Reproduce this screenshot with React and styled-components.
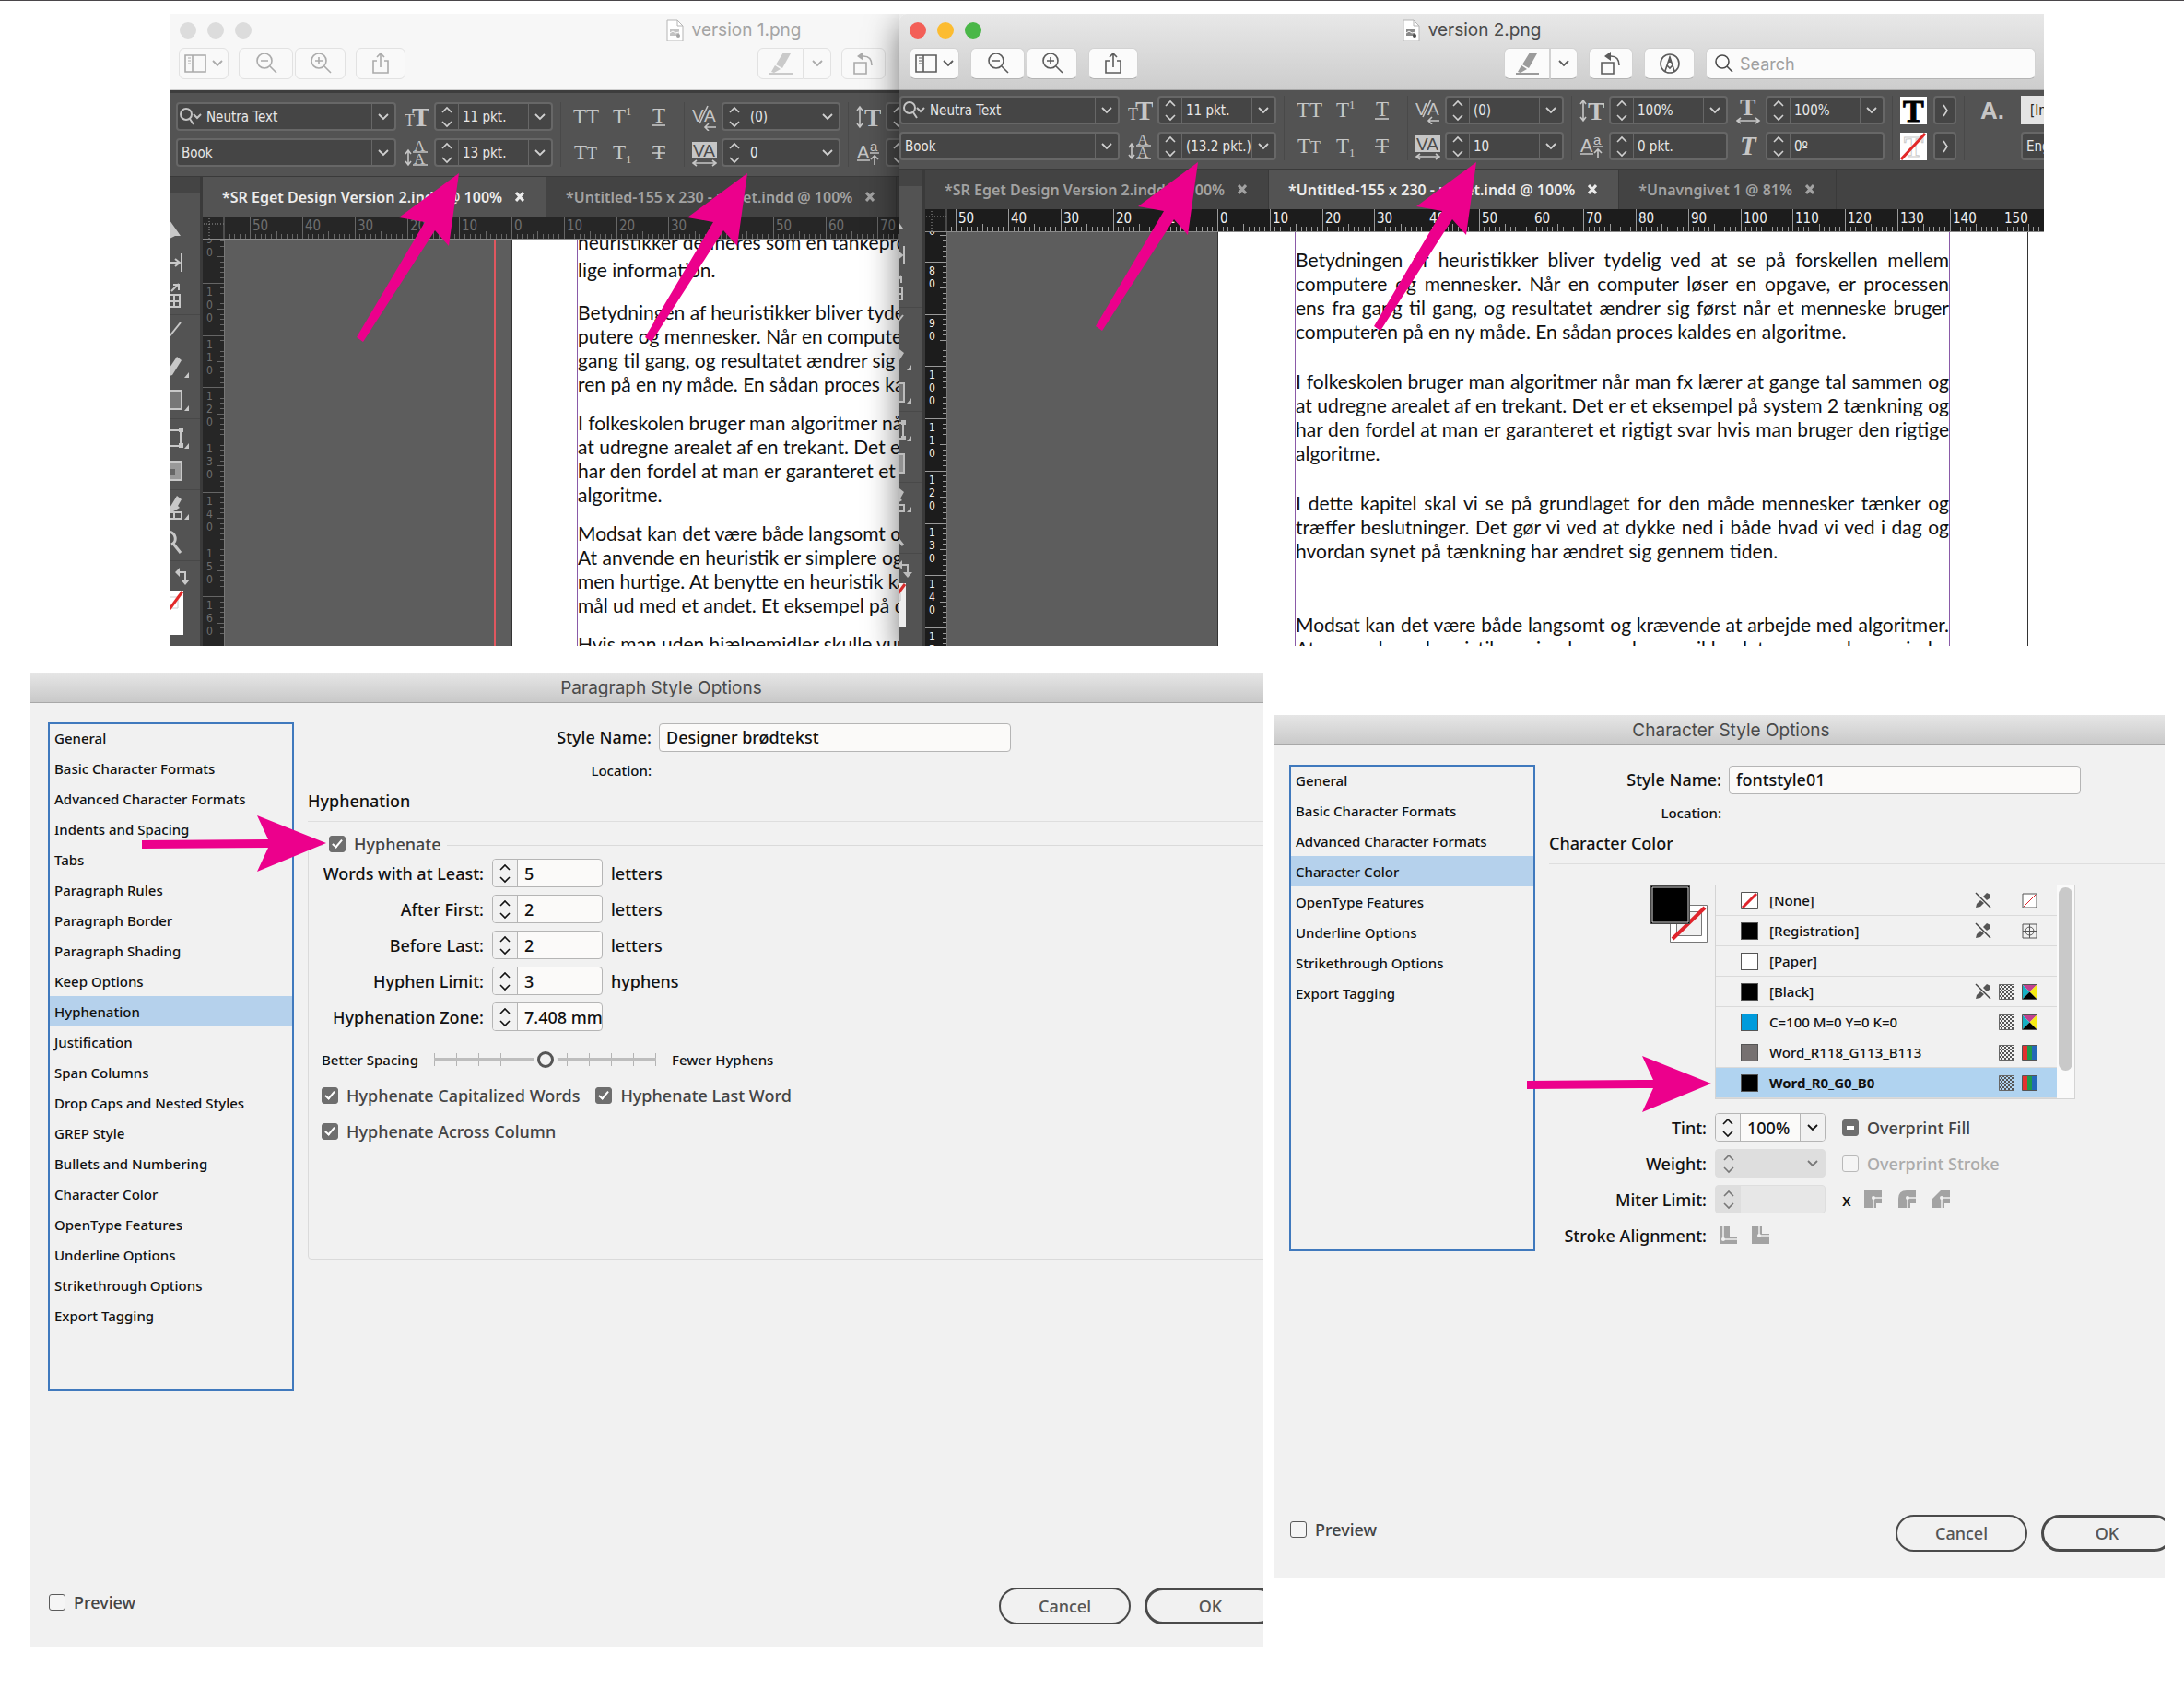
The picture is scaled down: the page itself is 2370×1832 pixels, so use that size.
import React, { Fragment, useId, useState } from 'react';
import styled, { createGlobalStyle } from 'styled-components';

const GlobalStyle = createGlobalStyle`
  * {
    box-sizing: border-box;
  }

  body {
    margin: 0;
    background: #fff;
  }

  button,
  input {
    margin: 0;
    font: inherit;
    color: inherit;
  }
`;

const systemFont = "Inter, Roboto, 'Liberation Sans', sans-serif";
const dialogFont = "'Noto Sans', 'Open Sans', sans-serif";
const panelFont = "'DejaVu Sans Condensed', 'DejaVu Sans', sans-serif";

const Page = styled.main`
  min-height: 100vh;
  border-top: 1px solid #4a464a;
  padding-bottom: 44px;
`;

/* ---------- arrows ---------- */

const ArrowSvg = styled.svg`
  position: absolute;
  left: ${props => props.$x}px;
  top: ${props => props.$y}px;
  z-index: 5;
  fill: #ec008c;
  pointer-events: none;
`;

const SlantedArrow = ({ x, y }) => (
  <ArrowSvg $x={x} $y={y} width="112" height="184" viewBox="0 0 112 184" aria-hidden="true">
    <path d="M111 0 46 48l28 5L0 178l7 5L85 62l15 17z" />
  </ArrowSvg>
);

const FlatArrow = ({ x, y }) => (
  <ArrowSvg $x={x} $y={y} width="200" height="62" viewBox="0 0 200 62" aria-hidden="true">
    <path d="M200 30 125 0l12 26L0 27v9l137-1-12 26z" />
  </ArrowSvg>
);

/* ---------- preview windows ---------- */

const Windows = styled.section`
  position: relative;
  display: grid;
  grid-template-columns: 792fr 1242fr;
  grid-template-rows: 686px;
  margin: 14px 152px 0 184px;
`;

const Window = styled.article`
  position: relative;
  z-index: ${props => (props.$active ? 2 : 1)};
  display: flex;
  flex-direction: column;
  min-width: 0;
  min-height: 0;
  border-radius: ${props => (props.$active ? '8px 0 0 0' : '0')};
  box-shadow: ${props => (props.$active ? '0 12px 36px rgba(0, 0, 0, 0.55)' : 'none')};
  clip-path: ${props => (props.$active ? 'inset(0 0 0 -60px)' : 'inset(0)')};
`;

const Chrome = styled.header`
  height: 83px;
  flex: none;
  overflow: hidden;
  font-family: ${systemFont};
  color: ${props => (props.$active ? '#4a4a4a' : '#a4a4a4')};
  background: ${props => (props.$active ? 'linear-gradient(#e8e8e8, #cdcdcd)' : '#f7f7f7')};
  border-bottom: 1px solid ${props => (props.$active ? '#a9a9a9' : '#cfcfcf')};
  border-top-left-radius: inherit;
`;

const TitleBar = styled.div`
  display: grid;
  grid-template-columns: 1fr auto 1fr;
  align-items: center;
  height: 35px;
  width: calc(100% + ${props => props.$overhang}px);
  padding: 0 11px;
`;

const Lights = styled.div`
  display: flex;
  gap: 12px;
`;

const Light = styled.button`
  width: 18px;
  height: 18px;
  padding: 0;
  border: 0;
  border-radius: 50%;
  background: ${props => props.$color};
`;

const WindowTitle = styled.h2`
  display: flex;
  align-items: center;
  gap: 9px;
  margin: 0;
  font-size: 19px;
  line-height: 24px;
  font-weight: 400;
`;

const ToolBar = styled.div`
  display: flex;
  align-items: center;
  gap: ${props => (props.$active ? 12 : 11)}px;
  height: 34px;
  margin-top: 2px;
  padding: ${props => (props.$active ? '0 9px 0 11px' : '0 15px 0 10px')};
`;

const Joined = styled.div`
  display: flex;
  gap: ${props => props.$gap || 0}px;
`;

const ToolButton = styled.button`
  display: flex;
  align-items: center;
  justify-content: center;
  gap: 6px;
  width: ${props => props.$width}px;
  height: 34px;
  padding: 0;
  border: 1px solid ${props => (props.$active ? '#d2d2d2' : '#e2e2e2')};
  border-bottom-color: ${props => (props.$active ? '#b4b4b4' : '#e2e2e2')};
  border-radius: ${props => props.$radius || '6px'};
  background: ${props => (props.$active ? '#fbfbfb' : '#f9f9f9')};
  color: ${props => (props.$active ? '#5c5c5c' : '#ababab')};

  & + & {
    border-left-width: ${props => (props.$merged ? 0 : 1)}px;
  }
`;

const Spacer = styled.div`
  flex: 1;
`;

const SearchBox = styled.label`
  display: flex;
  align-items: center;
  gap: 7px;
  width: 358px;
  height: 34px;
  padding: 0 9px;
  border: 1px solid #d2d2d2;
  border-bottom-color: #b4b4b4;
  border-radius: 6px;
  background: #fbfbfb;

  input {
    flex: 1;
    min-width: 0;
    border: 0;
    outline: 0;
    padding: 0;
    background: transparent;
    font-size: 18px;
  }

  input::placeholder {
    color: #a0a0a0;
    opacity: 1;
  }
`;

const Stroke = ({ width = 24, height = 24, children, ...rest }) => (
  <svg
    width={width}
    height={height}
    viewBox={`0 0 ${width} ${height}`}
    fill="none"
    stroke="currentColor"
    strokeWidth="1.6"
    aria-hidden="true"
    {...rest}
  >
    {children}
  </svg>
);

const FileIcon = () => (
  <Stroke width={19} height={24} strokeWidth="1">
    <path d="M1 1h11l6 6v16H1z" fill="#fff" stroke="#b5b5b5" />
    <path d="M12 1v6h6" stroke="#b5b5b5" />
    <path d="M4 11h10v7H4z" fill="currentColor" stroke="none" opacity=".65" />
    <path d="m4 15 3-2 3 2 4-1M9 19h6" stroke="#fff" />
    <circle cx="13" cy="18" r="2" fill="currentColor" stroke="none" />
  </Stroke>
);

const SidebarIcon = () => (
  <Stroke width={24} height={20}>
    <path d="M1 1h22v18H1zM9 1v18" />
    <path d="M4 4h3M4 7h3M4 10h3" strokeWidth="1.2" />
  </Stroke>
);

const ChevronIcon = () => (
  <Stroke width={12} height={8} strokeWidth="1.8">
    <path d="m1 1 5 5 5-5" />
  </Stroke>
);

const LensIcon = ({ plus }) => (
  <Stroke width={24} height={24}>
    <circle cx="10" cy="9" r="8" />
    <path d="m16 15 7 7M6 9h8" />
    {plus && <path d="M10 5v8" />}
  </Stroke>
);

const ShareIcon = () => (
  <Stroke width={20} height={26}>
    <path d="M6 10H2v13h16V10h-4M10 17V2M6 6l4-4 4 4" />
  </Stroke>
);

const MarkerIcon = () => (
  <svg width="26" height="26" viewBox="0 0 26 26" fill="currentColor" opacity=".6" aria-hidden="true">
    <path d="m16 1 8 1-9 16-7-4zM7 15l6 4-7 4-3-1zM1 23h25v2H1z" />
  </svg>
);

const RotateIcon = () => (
  <Stroke width={24} height={26}>
    <path d="M2 12h13v12H2zM12 5c6 0 9 4 9 10" />
    <path d="m5 5 7-5v10z" fill="currentColor" stroke="none" />
  </Stroke>
);

const MarkupIcon = () => (
  <Stroke width={24} height={24}>
    <circle cx="12" cy="12" r="10" />
    <path d="m7 20 5-15 5 15M9 14l3 3 3-3" />
    <path d="m12 4 2 7h-4z" fill="currentColor" stroke="none" />
  </Stroke>
);

const SearchIcon = () => (
  <Stroke width={20} height={22}>
    <circle cx="8" cy="9" r="7" />
    <path d="m13 14 6 6" />
  </Stroke>
);

const PreviewChrome = ({ title, active }) => {
  const colors = active ? ['#f35f57', '#fcbc31', '#4ab748'] : ['#dcdcdc', '#dcdcdc', '#dcdcdc'];
  return (
    <Chrome $active={active}>
      <TitleBar $overhang={active ? 0 : 432}>
        <Lights>
          {['Close', 'Minimize', 'Zoom'].map((name, i) => (
            <Light key={name} $color={colors[i]} aria-label={name} />
          ))}
        </Lights>
        <WindowTitle>
          <FileIcon />
          {title}
        </WindowTitle>
      </TitleBar>
      <ToolBar $active={active}>
        <ToolButton $active={active} $width={54} aria-label="View">
          <SidebarIcon />
          <ChevronIcon />
        </ToolButton>
        <Joined $gap={2}>
          <ToolButton $active={active} $width={59} aria-label="Zoom out">
            <LensIcon />
          </ToolButton>
          <ToolButton $active={active} $width={55} aria-label="Zoom in">
            <LensIcon plus />
          </ToolButton>
        </Joined>
        <ToolButton $active={active} $width={54} aria-label="Share">
          <ShareIcon />
        </ToolButton>
        <Spacer />
        <Joined>
          <ToolButton $active={active} $width={50} $radius="6px 0 0 6px" aria-label="Highlight">
            <MarkerIcon />
          </ToolButton>
          <ToolButton
            $active={active}
            $merged
            $width={30}
            $radius="0 6px 6px 0"
            aria-label="Highlight colors"
          >
            <ChevronIcon />
          </ToolButton>
        </Joined>
        <ToolButton $active={active} $width={48} aria-label="Rotate">
          <RotateIcon />
        </ToolButton>
        {active && (
          <Fragment>
            <ToolButton $active $width={55} aria-label="Markup">
              <MarkupIcon />
            </ToolButton>
            <SearchBox>
              <SearchIcon />
              <input type="search" placeholder="Search" aria-label="Search" />
            </SearchBox>
          </Fragment>
        )}
      </ToolBar>
    </Chrome>
  );
};

/* ---------- control panel ---------- */

const ControlPanel = styled.div`
  display: flex;
  flex: none;
  overflow: hidden;
  padding: ${props => (props.$first ? '10px 0 10px 7px' : '6px 0 9px')};
  border-top: ${props => (props.$first ? 3 : 0)}px solid #3d3d3d;
  background: #535353;
  color: #e8e8e8;
  font-family: ${panelFont};
  font-size: 15px;
`;

const Group = styled.div`
  display: grid;
  grid-template-columns: ${props => props.$columns || 'auto'};
  grid-auto-rows: 31px;
  flex: none;
  align-items: center;
  gap: 8px ${props => props.$gap || 0}px;
  margin-right: ${props => props.$after || 0}px;
`;

const Divider = styled.div`
  flex: none;
  width: 1px;
  margin: 0 8px;
  background: #494949;
`;

const Field = styled.div`
  display: flex;
  width: ${props => props.$width || 129}px;
  height: 31px;
  border: 2px solid #676767;
  border-radius: 4px;
  background: #454545;

  input {
    flex: 1;
    min-width: 0;
    border: 0;
    outline: 0;
    padding: 0 0 0 4px;
    background: transparent;
  }
`;

const FieldButton = styled.button`
  display: flex;
  align-items: center;
  justify-content: center;
  flex: none;
  width: 25px;
  padding: 0;
  border: 0;
  border-left: ${props => (props.$left ? 0 : 1)}px solid #676767;
  border-right: ${props => (props.$left ? 1 : 0)}px solid #676767;
  background: transparent;
  color: #d0d0d0;
`;

const Prefix = styled.span`
  display: flex;
  align-items: center;
  padding-left: 1px;
  color: #c4c4c4;
`;

const GlyphButton = styled.button`
  display: flex;
  align-items: center;
  justify-content: center;
  height: 31px;
  padding: 0;
  border: 0;
  background: transparent;
  color: #c6c6c6;
`;

const ArrowsIcon = () => (
  <Stroke width={14} height={24}>
    <path d="m2 7 5-5 5 5M2 17l5 5 5-5" />
  </Stroke>
);

const GlyphSvg = ({ children, width = 27 }) => (
  <svg
    width={width}
    height="31"
    viewBox={`0 0 ${width} 31`}
    fill="#c6c6c6"
    stroke="none"
    fontFamily="'Liberation Serif', serif"
    aria-hidden="true"
  >
    {children}
  </svg>
);

const lineStyle = { stroke: '#c6c6c6', strokeWidth: 1.6, fill: 'none' };

const SizeIcon = () => (
  <GlyphSvg>
    <text x="0" y="26" fontSize="18">T</text>
    <text x="8" y="26" fontSize="30" fontWeight="700">T</text>
  </GlyphSvg>
);

const LeadingIcon = () => (
  <GlyphSvg>
    <text x="10" y="14" fontSize="17">A</text>
    <text x="10" y="28" fontSize="17">A</text>
    <path d="M9 15h16M9 29h16M4 14v14M1 17l3-4 3 4M1 25l3 4 3-4" {...lineStyle} />
  </GlyphSvg>
);

const KerningIcon = () => (
  <GlyphSvg>
    <text x="0" y="21" fontSize="19" fontFamily="'Liberation Sans'">V</text>
    <text x="13" y="21" fontSize="19" fontFamily="'Liberation Sans'">A</text>
    <path d="M8 23 17 4M26 27H14M18 23l-4 4 4 4" {...lineStyle} />
  </GlyphSvg>
);

const TrackingIcon = () => (
  <GlyphSvg>
    <path d="M0 4h27v18H0z" />
    <text x="1" y="20" fontSize="19" fill="#4a4a4a" fontFamily="'Liberation Sans'">VA</text>
    <path d="M2 27h23M5 24l-4 3 4 3M22 24l4 3-4 3" {...lineStyle} />
  </GlyphSvg>
);

const TallIcon = () => (
  <GlyphSvg>
    <text x="9" y="26" fontSize="28" fontWeight="700">T</text>
    <path d="M4 6v20M1 9l3-4 3 4M1 23l3 4 3-4" {...lineStyle} />
  </GlyphSvg>
);

const WideIcon = () => (
  <GlyphSvg>
    <text x="4" y="21" fontSize="26" fontWeight="700">T</text>
    <path d="M2 27h22M5 24l-4 3 4 3M21 24l4 3-4 3" {...lineStyle} />
  </GlyphSvg>
);

const BaselineIcon = () => (
  <GlyphSvg>
    <text x="1" y="22" fontSize="20" fontFamily="'Liberation Sans'">A</text>
    <text x="15" y="14" fontSize="15" fontFamily="'Liberation Sans'">a</text>
    <path d="M1 24h14M15 16h10M20 29V20M16 23l4-4 4 4" {...lineStyle} />
  </GlyphSvg>
);

const SkewIcon = () => (
  <GlyphSvg>
    <text x="4" y="25" fontSize="29" fontWeight="700" fontStyle="italic">T</text>
  </GlyphSvg>
);

const TypeGlyph = ({ kind }) => {
  switch (kind) {
    case 'All caps':
      return (
        <GlyphSvg width={29}>
          <text x="0" y="23" fontSize="23">TT</text>
        </GlyphSvg>
      );
    case 'Superscript':
      return (
        <GlyphSvg width={24}>
          <text x="1" y="23" fontSize="23">T</text>
          <text x="15" y="14" fontSize="13">1</text>
        </GlyphSvg>
      );
    case 'Underline':
      return (
        <GlyphSvg width={18}>
          <text x="2" y="22" fontSize="23">T</text>
          <path d="M1 25h15" {...lineStyle} />
        </GlyphSvg>
      );
    case 'Small caps':
      return (
        <GlyphSvg width={29}>
          <text x="1" y="23" fontSize="23">T</text>
          <text x="15" y="23" fontSize="18">T</text>
        </GlyphSvg>
      );
    case 'Subscript':
      return (
        <GlyphSvg width={24}>
          <text x="1" y="23" fontSize="23">T</text>
          <text x="15" y="27" fontSize="13">1</text>
        </GlyphSvg>
      );
    default:
      return (
        <GlyphSvg width={18}>
          <text x="2" y="23" fontSize="23">T</text>
          <path d="M1 16h15" {...lineStyle} />
        </GlyphSvg>
      );
  }
};

const glyphs = ['All caps', 'Superscript', 'Underline', 'Small caps', 'Subscript', 'Strikethrough'];

const SwatchT = styled.span`
  display: flex;
  align-items: center;
  justify-content: center;
  height: 30px;
  overflow: hidden;
  background: #fff;
`;

const MoreButton = styled.button`
  display: flex;
  align-items: center;
  justify-content: center;
  width: 25px;
  height: 31px;
  padding: 0;
  border: 2px solid #676767;
  border-radius: 4px;
  background: #454545;
  color: #d0d0d0;
`;

const PlainBox = styled.div`
  display: flex;
  align-items: center;
  width: 60px;
  height: 31px;
  padding-left: ${props => (props.$light ? 10 : 4)}px;
  border: ${props => (props.$light ? 0 : 2)}px solid #676767;
  border-radius: ${props => (props.$light ? 0 : 4)}px;
  background: ${props => (props.$light ? '#e4e4e4' : '#454545')};
  color: ${props => (props.$light ? '#222' : '#e8e8e8')};
`;

const NumberField = ({ name, value, menu = true }) => (
  <Field>
    <FieldButton $left aria-label={`${name} step`}>
      <ArrowsIcon />
    </FieldButton>
    <input defaultValue={value} aria-label={name} />
    {menu && (
      <FieldButton aria-label={`${name} menu`}>
        <ChevronIcon />
      </FieldButton>
    )}
  </Field>
);

const FontFields = () => (
  <Group $after={9}>
    <Field $width={239}>
      <Prefix>
        <Stroke width={26} height={20} strokeWidth="2">
          <circle cx="8" cy="7" r="6" />
          <path d="m12 12 4 6M16 7l4 4 4-4" />
        </Stroke>
      </Prefix>
      <input defaultValue="Neutra Text" aria-label="Font" />
      <FieldButton aria-label="Font menu">
        <ChevronIcon />
      </FieldButton>
    </Field>
    <Field $width={239}>
      <input defaultValue="Book" aria-label="Font style" />
      <FieldButton aria-label="Font style menu">
        <ChevronIcon />
      </FieldButton>
    </Field>
  </Group>
);

const Controls = ({ leading, tracking, first }) => (
  <ControlPanel $first={first}>
    <FontFields />
    <Group $columns="27px auto" $gap={5}>
      <SizeIcon />
      <NumberField name="Size" value="11 pkt." />
      <LeadingIcon />
      <NumberField name="Leading" value={leading} />
    </Group>
    <Divider />
    <Group $columns="39px 39px 39px">
      {glyphs.map(kind => (
        <GlyphButton key={kind} aria-label={kind}>
          <TypeGlyph kind={kind} />
        </GlyphButton>
      ))}
    </Group>
    <Divider />
    <Group $columns="27px auto" $gap={5}>
      <KerningIcon />
      <NumberField name="Kerning" value="(0)" />
      <TrackingIcon />
      <NumberField name="Tracking" value={tracking} />
    </Group>
    <Divider />
    <Group $columns="27px auto" $gap={5} $after={9}>
      <TallIcon />
      <NumberField name="Vertical scale" value={first ? '' : '100%'} />
      <BaselineIcon />
      <NumberField name="Baseline shift" value={first ? '' : '0 pkt.'} menu={false} />
    </Group>
    {!first && (
      <Fragment>
        <Group $columns="27px auto" $gap={5}>
          <WideIcon />
          <NumberField name="Horizontal scale" value="100%" />
          <SkewIcon />
          <NumberField name="Skew" value="0º" menu={false} />
        </Group>
        <Divider />
        <Group $columns="29px 25px" $gap={7}>
          <SwatchT>
            <svg width="29" height="30" viewBox="0 0 29 30" fontFamily="'Liberation Serif'" aria-hidden="true">
              <text x="3" y="27" fontSize="34" fontWeight="700" stroke="#000">T</text>
            </svg>
          </SwatchT>
          <MoreButton aria-label="Fill options">
            <Stroke width={8} height={14}>
              <path d="m2 1 4 6-4 6" />
            </Stroke>
          </MoreButton>
          <SwatchT>
            <svg width="29" height="30" viewBox="0 0 29 30" fontFamily="'Liberation Serif'" aria-hidden="true">
              <text x="4" y="26" fontSize="32" fontWeight="700" fill="none" stroke="#ccc">T</text>
              <path d="M1 29 27 1" stroke="#e22828" strokeWidth="3" />
            </svg>
          </SwatchT>
          <MoreButton aria-label="Stroke options">
            <Stroke width={8} height={14}>
              <path d="m2 1 4 6-4 6" />
            </Stroke>
          </MoreButton>
        </Group>
        <Divider />
        <Group $columns="43px auto" $gap={10}>
          <svg width="43" height="31" viewBox="0 0 43 31" fill="#c6c6c6" fontFamily="'Liberation Sans'" aria-hidden="true">
            <text x="9" y="25" fontSize="26" fontWeight="700">A.</text>
          </svg>
          <PlainBox $light>[In</PlainBox>
          <span />
          <PlainBox>Eng</PlainBox>
        </Group>
      </Fragment>
    )}
  </ControlPanel>
);

/* ---------- document area ---------- */

const Workspace = styled.div`
  display: flex;
  flex: 1;
  min-height: 0;
  border-top: 1px solid #3a3a3a;
  background: #3a3a3a;
`;

const Tools = styled.div`
  flex: none;
  width: ${props => (props.$first ? 33 : 25)}px;
  margin-right: 3px;
  overflow: hidden;
  border-top: 18px solid #444;
  background: #535353;
`;

const ToolColumn = styled.div`
  display: flex;
  flex-direction: column;
  width: 33px;
  margin-left: ${props => (props.$first ? 0 : -8)}px;
  padding-top: 21px;
  opacity: ${props => (props.$first ? 1 : 0.9)};
`;

const ToolRule = styled.hr`
  width: 100%;
  height: 1px;
  margin: 2px 0;
  border: 0;
  background: #484848;
`;

const ToolIcon = ({ height = 36, corner, children }) => (
  <svg width="24" height={height} viewBox={`0 0 24 ${height}`} fill="#c8c8c8" aria-hidden="true">
    {children}
    {corner && <path d="M21 24v6h-5z" />}
  </svg>
);

const toolLine = { fill: 'none', stroke: '#c8c8c8', strokeWidth: 2 };

const ToolStrip = ({ first }) => (
  <Tools $first={first}>
    <ToolColumn $first={first}>
      <ToolIcon>
        <path d="M0 8 12 25H6l-6 3z" />
      </ToolIcon>
      <ToolIcon>
        <path d="M13 8v20M0 18h10M6 14l5 4-5 4" {...toolLine} />
      </ToolIcon>
      <ToolIcon>
        <path d="M0 17h11v13H0M0 24h11M5 17v12M2 13l8-8M4 6h6v6" {...toolLine} />
      </ToolIcon>
      <ToolRule />
      <ToolIcon>
        <path d="M0 21 12 6" {...toolLine} />
      </ToolIcon>
      <ToolIcon corner>
        <path d="m0 19 8-12 5 4-10 16-3 1z" />
      </ToolIcon>
      <ToolIcon corner>
        <path d="M-8 8h21v20H-8z" {...toolLine} fill="#777" />
      </ToolIcon>
      <ToolRule />
      <ToolIcon corner>
        <path d="M0 10h12v17H0" {...toolLine} />
        <path d="M10 7h5v5h-5zM10 24h5v5h-5z" />
      </ToolIcon>
      <ToolIcon>
        <path d="M-8 8h21v20H-8z" {...toolLine} fill="#999" />
        <path d="M0 16h6v6H0z" fill="#666" />
      </ToolIcon>
      <ToolRule />
      <ToolIcon corner>
        <path d="M2 14 8 4l5 4-4 7 2 2-5 3-6 3v-6z" />
        <path d="M0 22h13v7H0z" {...toolLine} />
        <path d="M5 22v7" {...toolLine} />
      </ToolIcon>
      <ToolIcon>
        <path d="M-2 7c9 0 11 11 4 14M4 20l8 10" {...toolLine} strokeWidth="3" />
      </ToolIcon>
      <ToolRule />
      <ToolIcon height={30}>
        <path d="M9 10h8v10" {...toolLine} />
        <path d="m11 5-5 5 5 5zM12 18h10l-5 6z" />
      </ToolIcon>
      <ToolIcon height={48}>
        <path d="M0 0h15v48H0z" fill="#fff" />
        <path d="M0 7h9v12H0" fill="none" stroke="#ccc" />
        <path d="M0 20 14 1" stroke="#e22828" strokeWidth="3" />
      </ToolIcon>
    </ToolColumn>
  </Tools>
);

const DocumentView = styled.div`
  display: flex;
  flex-direction: column;
  flex: 1;
  min-width: 0;
  min-height: 0;
`;

const Tabs = styled.nav`
  display: flex;
  height: 43px;
  flex: none;
  overflow: hidden;
  background: #434343;
`;

const Tab = styled.div`
  display: flex;
  align-items: center;
  gap: 14px;
  flex: none;
  padding: 0 23px 0 21px;
  border-right: 1px solid #3a3a3a;
  background: ${props => (props.$current ? '#535353' : '#434343')};
  color: ${props => (props.$current ? '#ececec' : '#a2a2a2')};
  font-family: 'Noto Sans', 'Open Sans', sans-serif;
  font-size: 16px;
  font-weight: 600;
  white-space: nowrap;
`;

const TabClose = styled.button`
  padding: 0;
  border: 0;
  background: transparent;
  line-height: 0;
`;

const RulerRow = styled.div`
  display: flex;
  flex: none;
  height: 25px;
  overflow: hidden;
  background: ${props => (props.$dim ? '#262626' : '#1c1c1c')};
  border-bottom: 1px solid #8a8a8a;
`;

const RulerSvg = styled.svg`
  display: block;
  flex: none;
  background: ${props => (props.$dim ? '#262626' : '#1c1c1c')};
  color: ${props => (props.$dim ? '#6f6f6f' : '#f0f0f0')};
  font-family: ${panelFont};
  font-size: ${props => (props.$small ? 12 : 15)}px;
`;

const MM = 5.675;

const tickLength = mm => {
  if (mm % 10 === 0) return 24;
  return mm % 5 === 0 ? 8 : 5;
};

const range = (from, to) => Array.from({ length: to - from + 1 }, (_, i) => from + i);

const HorizontalRuler = ({ zero, from, to, dim }) => (
  <RulerRow $dim={dim}>
    <RulerSvg $dim={dim} width="24" height="24" aria-hidden="true">
      <path d="M7 2v22M1 8h22" stroke="#9a9a9a" strokeDasharray="1 2" />
      <path d="M23 0v24" stroke="#777" />
    </RulerSvg>
    <RulerSvg $dim={dim} width={zero + to * MM} height="24" aria-hidden="true">
      {range(from, to).map(mm => {
        const x = Math.round(zero + mm * MM);
        return (
          <Fragment key={mm}>
            <path d={`M${x}.5 24v-${tickLength(mm)}`} stroke={dim ? '#666' : '#9a9a9a'} />
            {mm % 10 === 0 && (
              <text x={x + 3} y="15" fill="currentColor">
                {Math.abs(mm)}
              </text>
            )}
          </Fragment>
        );
      })}
    </RulerSvg>
  </RulerRow>
);

const VerticalRuler = ({ start, from, to, dim }) => (
  <RulerSvg $dim={dim} $small width="24" height="450" aria-hidden="true">
    {range(from, to).map(mm => {
      const y = Math.round(start + (mm - from) * MM);
      return (
        <Fragment key={mm}>
          <path d={`M23 ${y}.5h-${mm % 10 ? tickLength(mm) - 1 : 23}`} stroke={dim ? '#666' : '#9a9a9a'} />
          {mm % 10 === 0 &&
            String(mm)
              .split('')
              .map((digit, i) => (
                <text key={i} x="4" y={y + 14 + i * 14} fill="currentColor">
                  {digit}
                </text>
              ))}
        </Fragment>
      );
    })}
    <path d="M23.5 0v450" stroke="#777" />
  </RulerSvg>
);

const Canvas = styled.div`
  display: flex;
  flex: 1;
  min-height: 0;
  overflow: hidden;
  background: #5d5d5d;
`;

const Pasteboard = styled.div`
  flex: none;
  width: ${props => props.$width}px;
  padding-right: 17px;
  border-right: 1px solid #333;
`;

const Bleed = styled.div`
  height: 100%;
  border-right: ${props => (props.$visible ? 2 : 0)}px solid #e0575f;
`;

const Sheet = styled.div`
  display: flex;
  flex: 1;
  min-width: 0;
  padding-left: ${props => (props.$first ? 70 : 83)}px;
  padding-right: ${props => (props.$first ? 0 : 84)}px;
  border-right: ${props => (props.$first ? 0 : 1)}px solid #333;
  background: #fff;
`;

const Outside = styled.div`
  flex: none;
  width: 17px;
  background: #fff;
`;

const TextFrame = styled.div`
  flex: 1;
  min-width: 0;
  overflow: hidden;
  padding-top: ${props => (props.$first ? 0 : 17)}px;
  border: 0 solid #8a5aa8;
  border-left-width: 1px;
  border-right-width: ${props => (props.$first ? 0 : 1)}px;
  color: #111;
  font-family: Lato, 'Open Sans', sans-serif;
  font-size: 21px;
  line-height: 26px;
`;

const Paragraph = styled.p`
  margin: ${props => props.$before || 0}px 0 ${props => props.$after}px;
`;

const Line = styled.span`
  display: block;
  white-space: nowrap;
  text-align-last: ${props => (props.$full ? 'justify' : 'left')};
`;

const DocumentTab = ({ name, current }) => (
  <Tab $current={current}>
    {name}
    <TabClose aria-label={`Close ${name}`}>
      <Stroke width={10} height={11} strokeWidth="3">
        <path d="m1 1 8 9M9 1 1 10" />
      </Stroke>
    </TabClose>
  </Tab>
);

const firstText = [
  { before: -10, after: 4, lines: ['heuristikker defineres som en tankeproces'] },
  { after: 20, lines: ['lige information.'] },
  {
    after: 16,
    lines: [
      'Betydningen af heuristikker bliver tydelig',
      'putere og mennesker. Når en computer',
      'gang til gang, og resultatet ændrer sig',
      'ren på en ny måde. En sådan proces kaldes',
    ],
  },
  {
    after: 16,
    lines: [
      'I folkeskolen bruger man algoritmer når',
      'at udregne arealet af en trekant. Det er',
      'har den fordel at man er garanteret et',
      'algoritme.',
    ],
  },
  {
    after: 16,
    lines: [
      'Modsat kan det være både langsomt og',
      'At anvende en heuristik er simplere og',
      'men hurtige. At benytte en heuristik kan',
      'mål ud med et andet. Et eksempel på de',
    ],
  },
  { after: 0, lines: ['Hvis man uden hjælpemidler skulle vurdere'] },
];

const secondText = [
  {
    after: 28,
    lines: [
      'Betydningen af heuristikker bliver tydelig ved at se på forskellen mellem',
      'computere og mennesker. Når en computer løser en opgave, er processen',
      'ens fra gang til gang, og resultatet ændrer sig først når et menneske bruger',
      'computeren på en ny måde. En sådan proces kaldes en algoritme.',
    ],
  },
  {
    after: 28,
    lines: [
      'I folkeskolen bruger man algoritmer når man fx lærer at gange tal sammen og',
      'at udregne arealet af en trekant. Det er et eksempel på system 2 tænkning og',
      'har den fordel at man er garanteret et rigtigt svar hvis man bruger den rigtige',
      'algoritme.',
    ],
  },
  {
    after: 54,
    lines: [
      'I dette kapitel skal vi se på grundlaget for den måde mennesker tænker og',
      'træffer beslutninger. Det gør vi ved at dykke ned i både hvad vi ved i dag og',
      'hvordan synet på tænkning har ændret sig gennem tiden.',
    ],
  },
  {
    after: 0,
    open: true,
    lines: [
      'Modsat kan det være både langsomt og krævende at arbejde med algoritmer.',
      'At anvende en heuristik er simplere og kræver ikke det samme, de er mindre',
    ],
  },
];

const BodyText = ({ paragraphs, justified }) =>
  paragraphs.map(paragraph => (
    <Paragraph key={paragraph.lines[0]} $before={paragraph.before} $after={paragraph.after}>
      {paragraph.lines.map((line, i) => (
        <Line
          key={line}
          $full={justified && (paragraph.open || i < paragraph.lines.length - 1)}
        >
          {line}
        </Line>
      ))}
    </Paragraph>
  ));

const FirstWindow = () => (
  <Window>
    <PreviewChrome title="version 1.png" />
    <Controls first leading="13 pkt." tracking="0" />
    <Workspace>
      <ToolStrip first />
      <DocumentView>
        <Tabs>
          <DocumentTab current name="*SR Eget Design Version 2.indd @ 100%" />
          <DocumentTab name="*Untitled-155 x 230 - rettet.indd @ 100%" />
        </Tabs>
        <HorizontalRuler dim zero={311} from={-54} to={75} />
        <Canvas>
          <VerticalRuler dim start={-10} from={90} to={168} />
          <Pasteboard $width={312}>
            <Bleed $visible />
          </Pasteboard>
          <Sheet $first>
            <TextFrame $first>
              <BodyText paragraphs={firstText} />
            </TextFrame>
          </Sheet>
        </Canvas>
      </DocumentView>
    </Workspace>
  </Window>
);

const SecondWindow = () => (
  <Window $active>
    <PreviewChrome active title="version 2.png" />
    <Controls leading="(13.2 pkt.)" tracking="10" />
    <Workspace>
      <ToolStrip />
      <DocumentView>
        <Tabs>
          <DocumentTab name="*SR Eget Design Version 2.indd @ 100%" />
          <DocumentTab current name="*Untitled-155 x 230 - rettet.indd @ 100%" />
          <DocumentTab name="*Unavngivet 1 @ 81%" />
        </Tabs>
        <HorizontalRuler zero={293} from={-51} to={159} />
        <Canvas>
          <VerticalRuler start={-25} from={70} to={154} />
          <Pasteboard $width={294}>
            <Bleed />
          </Pasteboard>
          <Sheet>
            <TextFrame>
              <BodyText paragraphs={secondText} justified />
            </TextFrame>
          </Sheet>
          <Outside />
        </Canvas>
      </DocumentView>
    </Workspace>
  </Window>
);

/* ---------- dialogs ---------- */

const Dialogs = styled.section`
  display: grid;
  grid-template-columns: 1338fr 967fr;
  column-gap: 11px;
  align-items: start;
  margin: 29px 21px 0 33px;
`;

const DialogShell = styled.article`
  position: relative;
  min-width: 0;
  margin-top: ${props => props.$offset || 0}px;
  overflow: hidden;
  background: #f1f1f1;
  color: #111;
  font-family: ${dialogFont};
  font-size: 18px;
  font-weight: 500;
  line-height: 24px;
`;

const DialogInner = styled.div`
  display: flex;
  flex-direction: column;
  width: calc(100% + ${props => props.$overhang}px);
  min-height: ${props => props.$height}px;
`;

const DialogTitle = styled.h2`
  margin: 0;
  height: 33px;
  border-bottom: 1px solid #a8a8a8;
  background: linear-gradient(#e6e6e6, #c9c9c9);
  color: #4a4a4a;
  font-family: ${systemFont};
  font-size: 19px;
  line-height: 33px;
  font-weight: 400;
  text-align: center;
`;

const DialogBody = styled.div`
  display: grid;
  grid-template-columns: 267px 1fr;
  column-gap: 15px;
  align-items: start;
  padding: 21px 17px 0 ${props => props.$pad}px;
`;

const CategoryList = styled.ul`
  height: ${props => props.$height}px;
  margin: 0;
  padding: 0 2px;
  list-style: none;
  outline: 2px solid #4079bd;
  outline-offset: -2px;
`;

const Category = styled.li`
  button {
    display: block;
    width: 100%;
    height: 33px;
    padding: 0 5px;
    border: 0;
    background: ${props => (props.$selected ? '#b5d1ec' : 'transparent')};
    font-size: 15px;
    text-align: left;
  }
`;

const StyleHeader = styled.div`
  display: grid;
  grid-template-columns: ${props => props.$label}px 382px;
  grid-template-rows: 32px 40px;
  column-gap: 8px;
  align-items: center;
`;

const RightLabel = styled.label`
  text-align: right;
  white-space: nowrap;
  font-size: ${props => (props.$small ? 15 : 18)}px;
`;

const StyleInput = styled.input`
  width: 100%;
  height: 31px;
  padding: 0 7px;
  border: 1px solid #b5b5b5;
  border-radius: 4px;
  background: #fbfaf9;
`;

const SectionTitle = styled.h3`
  margin: 0;
  height: 36px;
  border-bottom: 1px solid #dedede;
  font-size: 18px;
  line-height: 26px;
  font-weight: 500;
`;

const HyphenBox = styled.fieldset`
  min-width: 0;
  height: 463px;
  margin: 12px 0 0;
  padding: 2px 0 0 14px;
  border: 1px solid #dadada;
  border-radius: 4px;

  legend {
    margin-left: 2px;
    padding: 0 6px;
  }
`;

const FieldRows = styled.div`
  display: grid;
  grid-template-columns: ${props => props.$columns};
  grid-auto-rows: 31px;
  gap: 8px 9px;
  align-items: center;
`;

const Stepper = styled.div`
  display: flex;
  width: 120px;
  height: 31px;
  overflow: hidden;
  border: 1px solid ${props => (props.$disabled ? '#dedede' : '#b5b5b5')};
  border-radius: 4px;
  background: ${props => (props.$disabled ? '#dedede' : '#fbfaf9')};
  color: ${props => (props.$disabled ? '#777' : '#111')};

  input {
    flex: 1;
    min-width: 0;
    padding: 0 0 0 7px;
    border: 0;
    background: ${props => (props.$soft ? '#e7e7e7' : 'transparent')};
  }
`;

const StepButton = styled.button`
  display: flex;
  align-items: center;
  justify-content: center;
  flex: none;
  width: 27px;
  padding: 0;
  border: 0 solid #b5b5b5;
  border-right-width: ${props => (props.$left && !props.disabled ? 1 : 0)}px;
  border-left-width: ${props => (props.$left || props.disabled ? 0 : 1)}px;
  background: ${props => (props.disabled ? '#dedede' : '#f1f1f1')};
`;

const CheckLabel = styled.label`
  display: inline-flex;
  align-items: center;
  gap: 9px;
  color: ${props => (props.$disabled ? '#ababab' : '#444')};
  white-space: nowrap;
`;

const CheckInput = styled.input`
  position: relative;
  flex: none;
  appearance: none;
  width: 18px;
  height: 18px;
  border: 1px solid ${props => (props.$faded ? '#b9b9b9' : '#5a5a5a')};
  border-radius: 3px;
  background: #f5f5f5;

  &:checked {
    border-color: #6e6e6e;
    background: #6e6e6e;
  }

  &:checked::after {
    content: '';
    position: absolute;
    left: ${props => (props.$mixed ? 4 : 5)}px;
    top: ${props => (props.$mixed ? 6 : 1)}px;
    width: ${props => (props.$mixed ? 8 : 4)}px;
    height: ${props => (props.$mixed ? 4 : 9)}px;
    border: solid #fff;
    border-width: ${props => (props.$mixed ? '0' : '0 2px 2px 0')};
    background: ${props => (props.$mixed ? '#fff' : 'transparent')};
    transform: ${props => (props.$mixed ? 'none' : 'rotate(40deg)')};
  }
`;

const CheckRow = styled.div`
  display: flex;
  gap: 17px;
  margin-top: ${props => props.$before}px;
`;

const SliderRow = styled.div`
  display: flex;
  align-items: center;
  gap: 17px;
  height: 31px;
  margin-top: 15px;
  font-size: 15px;
`;

const Slider = styled.input`
  appearance: none;
  width: 241px;
  height: 18px;
  background:
    linear-gradient(#bdbdbd, #bdbdbd) center / 100% 3px no-repeat,
    linear-gradient(to right, #b4b4b4 1px, transparent 1px) left center / 24px 14px repeat-x;

  &::-webkit-slider-thumb {
    appearance: none;
    width: 18px;
    height: 18px;
    border: 3px solid #555;
    border-radius: 50%;
    background: #f1f1f1;
    box-shadow: 0 0 0 4px #f1f1f1;
  }
`;

const Footer = styled.footer`
  display: flex;
  align-items: flex-start;
  gap: 15px;
  margin-top: auto;
  padding: 0 17px ${props => props.$bottom}px ${props => props.$left}px;

  label {
    height: 32px;
    margin-right: auto;
  }
`;

const PillButton = styled.button`
  width: 143px;
  height: 40px;
  padding: 0;
  border: ${props => (props.$primary ? '3px' : '2px')} solid #4a4a4a;
  border-radius: 20px;
  background: transparent;
  color: #555;
`;

const Check = ({ label, checked = false, disabled, mixed }) => {
  const [on, setOn] = useState(checked);
  return (
    <CheckLabel $disabled={disabled}>
      <CheckInput
        type="checkbox"
        checked={on}
        disabled={disabled}
        $faded={disabled}
        $mixed={mixed}
        onChange={() => setOn(!on)}
      />
      {label}
    </CheckLabel>
  );
};

const StepArrows = () => (
  <Stroke width={14} height={22}>
    <path d="m2 7 5-5 5 5M2 15l5 5 5-5" />
  </Stroke>
);

const StepField = ({ id, value = '', disabled, soft, menu }) => (
  <Stepper $disabled={disabled} $soft={soft}>
    <StepButton $left disabled={disabled} aria-label="Step">
      <StepArrows />
    </StepButton>
    <input id={id} defaultValue={value} disabled={disabled} />
    {menu && (
      <StepButton disabled={disabled} aria-label="Menu">
        <ChevronIcon />
      </StepButton>
    )}
  </Stepper>
);

const Dialog = props => {
  const id = useId();
  const [selected, setSelected] = useState(props.selected);
  return (
    <DialogShell $offset={props.offset}>
      <DialogInner $overhang={props.overhang} $height={props.height}>
        <DialogTitle>{props.title}</DialogTitle>
        <DialogBody $pad={props.pad}>
          <CategoryList $height={props.listHeight}>
            {props.categories.map(name => (
              <Category key={name} $selected={name === selected}>
                <button onClick={() => setSelected(name)}>{name}</button>
              </Category>
            ))}
          </CategoryList>
          <div>
            <StyleHeader $label={props.label}>
              <RightLabel htmlFor={id}>Style Name:</RightLabel>
              <StyleInput id={id} defaultValue={props.name} />
              <RightLabel as="span" $small>
                Location:
              </RightLabel>
            </StyleHeader>
            <SectionTitle>{props.section}</SectionTitle>
            {props.children}
          </div>
        </DialogBody>
        <Footer $left={props.pad + 1} $bottom={props.bottom}>
          <Check label="Preview" />
          <PillButton>Cancel</PillButton>
          <PillButton $primary>OK</PillButton>
        </Footer>
      </DialogInner>
      {props.arrow}
    </DialogShell>
  );
};

const paragraphCategories = [
  'General',
  'Basic Character Formats',
  'Advanced Character Formats',
  'Indents and Spacing',
  'Tabs',
  'Paragraph Rules',
  'Paragraph Border',
  'Paragraph Shading',
  'Keep Options',
  'Hyphenation',
  'Justification',
  'Span Columns',
  'Drop Caps and Nested Styles',
  'GREP Style',
  'Bullets and Numbering',
  'Character Color',
  'OpenType Features',
  'Underline Options',
  'Strikethrough Options',
  'Export Tagging',
];

const characterCategories = [
  'General',
  'Basic Character Formats',
  'Advanced Character Formats',
  'Character Color',
  'OpenType Features',
  'Underline Options',
  'Strikethrough Options',
  'Export Tagging',
];

const hyphenFields = [
  { id: 'words', label: 'Words with at Least:', value: '5', unit: 'letters' },
  { id: 'after', label: 'After First:', value: '2', unit: 'letters' },
  { id: 'before', label: 'Before Last:', value: '2', unit: 'letters' },
  { id: 'limit', label: 'Hyphen Limit:', value: '3', unit: 'hyphens' },
  { id: 'zone', label: 'Hyphenation Zone:', value: '7.408 mm', unit: '' },
];

const ParagraphDialog = () => (
  <Dialog
    title="Paragraph Style Options"
    categories={paragraphCategories}
    selected="Hyphenation"
    name="Designer brødtekst"
    section="Hyphenation"
    overhang={31}
    height={1058}
    listHeight={726}
    pad={19}
    label={373}
    bottom={25}
    arrow={<FlatArrow x={121} y={155} />}
  >
    <HyphenBox>
      <legend>
        <Check checked label="Hyphenate" />
      </legend>
      <FieldRows $columns="176px 120px auto">
        {hyphenFields.map(field => (
          <Fragment key={field.id}>
            <RightLabel htmlFor={field.id}>{field.label}</RightLabel>
            <StepField id={field.id} value={field.value} />
            <span>{field.unit}</span>
          </Fragment>
        ))}
      </FieldRows>
      <SliderRow>
        <span>Better Spacing</span>
        <Slider type="range" defaultValue="50" aria-label="Better Spacing to Fewer Hyphens" />
        <span>Fewer Hyphens</span>
      </SliderRow>
      <CheckRow $before={12}>
        <Check checked label="Hyphenate Capitalized Words" />
        <Check checked label="Hyphenate Last Word" />
      </CheckRow>
      <CheckRow $before={15}>
        <Check checked label="Hyphenate Across Column" />
      </CheckRow>
    </HyphenBox>
  </Dialog>
);

/* ---------- swatches ---------- */

const ColorArea = styled.div`
  display: grid;
  grid-template-columns: 172px 391px;
  column-gap: 8px;
  margin: 22px 0 15px;
`;

const Proxy = styled.svg`
  justify-self: end;
`;

const SwatchBox = styled.div`
  display: grid;
  grid-template-columns: 1fr 19px;
  height: 233px;
  border: 1px solid #d4d4d4;
  background: #fafafa;
`;

const SwatchList = styled.ul`
  margin: 0;
  padding: 0;
  list-style: none;
  background: #f1f1f1;
`;

const Swatch = styled.li`
  display: grid;
  grid-template-columns: 19px 1fr 18px 17px 17px;
  align-items: center;
  column-gap: 8px;
  height: 33px;
  padding: 0 21px 0 27px;
  border-bottom: 1px solid #dadada;
  background: ${props => (props.$selected ? '#b0d3f0' : 'transparent')};
  font-size: 15px;
  font-weight: ${props => (props.$selected ? 700 : 500)};

  span {
    padding-left: 4px;
  }
`;

const Chip = styled.i`
  width: 19px;
  height: 19px;
  border: 1px solid #555;
  background: ${props => props.$color};
`;

const ScrollThumb = styled.div`
  width: 15px;
  height: 199px;
  margin: 2px;
  border-radius: 8px;
  background: #c9c9c9;
`;

const NoneChip = () => (
  <svg width="19" height="19" viewBox="0 0 19 19" aria-hidden="true">
    <path d="M.5.5h18v18H.5z" fill="#fff" stroke="#555" />
    <path d="M2 17 17 2" stroke="#e0242c" strokeWidth="3" />
  </svg>
);

const LockedIcon = () => (
  <svg width="18" height="18" viewBox="0 0 18 18" aria-hidden="true">
    <path d="m13 1 4 2-1 4-3 2-4-4zM6 9l4 3-4 4-5 1 1-4z" fill="#555" />
    <path d="m1 1 16 16" stroke="#444" strokeWidth="1.5" />
  </svg>
);

const TintIcon = () => (
  <svg width="17" height="17" viewBox="0 0 17 17" aria-hidden="true">
    <defs>
      <pattern id="dots" width="4" height="4" patternUnits="userSpaceOnUse">
        <path d="M0 0h2v2H0zM2 2h2v2H2z" fill="#555" />
      </pattern>
    </defs>
    <path d="M.5.5h16v16H.5z" fill="url(#dots)" stroke="#666" />
  </svg>
);

const ModeIcon = ({ mode }) => {
  switch (mode) {
    case 'none':
      return (
        <svg width="17" height="17" viewBox="0 0 17 17" aria-hidden="true">
          <path d="M1 1h15v15H1z" fill="#fff" stroke="#555" />
          <path d="M2 15 15 2" stroke="#e0242c" />
        </svg>
      );
    case 'registration':
      return (
        <svg width="17" height="17" viewBox="0 0 17 17" fill="none" stroke="#555" aria-hidden="true">
          <path d="M1 1h15v15H1zM8.5 1v15M1 8.5h15" />
          <circle cx="8.5" cy="8.5" r="4.5" />
        </svg>
      );
    case 'cmyk':
      return (
        <svg width="17" height="17" viewBox="0 0 17 17" aria-hidden="true">
          <path d="M1 1h15L8.5 8.5z" fill="#c0428f" />
          <path d="M1 1v15l7.5-7.5z" fill="#13b0c4" />
          <path d="M16 1v15L8.5 8.5z" fill="#f5ea14" />
          <path d="M1 16h15L8.5 8.5z" fill="#000" />
          <path d="M.5.5h16v16H.5z" fill="none" stroke="#555" />
        </svg>
      );
    case 'rgb':
      return (
        <svg width="17" height="17" viewBox="0 0 17 17" aria-hidden="true">
          <path d="M1 1h5v15H1z" fill="#e3302f" />
          <path d="M6 1h5v15H6z" fill="#1d9a4b" />
          <path d="M11 1h5v15h-5z" fill="#2468b8" />
          <path d="M.5.5h16v16H.5z" fill="none" stroke="#555" />
        </svg>
      );
    default:
      return <b />;
  }
};

const swatches = [
  { name: '[None]', locked: true, mode: 'none' },
  { name: '[Registration]', color: '#000', locked: true, mode: 'registration' },
  { name: '[Paper]', color: '#fff' },
  { name: '[Black]', color: '#000', locked: true, tint: true, mode: 'cmyk' },
  { name: 'C=100 M=0 Y=0 K=0', color: '#009bdc', tint: true, mode: 'cmyk' },
  { name: 'Word_R118_G113_B113', color: '#767171', tint: true, mode: 'rgb' },
  { name: 'Word_R0_G0_B0', color: '#000', tint: true, mode: 'rgb', selected: true },
];

const IconRow = styled.div`
  display: flex;
  align-items: center;
  gap: ${props => props.$gap || 0}px;
  padding-left: ${props => props.$before || 0}px;
`;

const JoinIcon = ({ d }) => (
  <svg width="19" height="19" viewBox="0 0 19 19" aria-hidden="true">
    <path d={d} fill="#a3a3a3" />
    <path d="M19 8h-9v11" fill="none" stroke="#f1f1f1" strokeWidth="1.5" />
    <circle cx="10" cy="8" r="2" fill="#f1f1f1" />
    <path d="M13 14h6v5h-6z" fill="#f1f1f1" />
  </svg>
);

const AlignIcon = ({ wide }) => (
  <svg width="19" height="19" viewBox="0 0 19 19" aria-hidden="true">
    <path d={wide ? 'M0 0h11v8h8v11H0z' : 'M0 0h11v11h8v8H0z'} fill="#a3a3a3" />
    <path d={wide ? 'M8 0v10h11' : 'M4 0v14h15'} fill="none" stroke="#f1f1f1" strokeWidth="1.5" />
    <circle cx={wide ? 8 : 4} cy={wide ? 10 : 14} r="2" fill="#f1f1f1" />
  </svg>
);

const CharacterDialog = () => (
  <Dialog
    title="Character Style Options"
    categories={characterCategories}
    selected="Character Color"
    name="fontstyle01"
    section="Character Color"
    offset={46}
    overhang={26}
    height={937}
    listHeight={528}
    pad={17}
    label={187}
    bottom={29}
    arrow={<FlatArrow x={275} y={370} />}
  >
    <ColorArea>
      <Proxy width="62" height="64" viewBox="0 0 62 64" aria-hidden="true">
        <path d="M21.5 22.5h40v40h-40z" fill="#fff" stroke="#777" />
        <path d="M28.5 29.5h27v26h-27z" fill="#f1f1f1" stroke="#777" />
        <path d="m24 59 35-34" stroke="#e0242c" strokeWidth="4" />
        <path d="M.5 1.5h42v41H.5z" fill="#000" stroke="#444" />
        <path d="M2 3h39v38H2z" fill="none" stroke="#ddd" />
      </Proxy>
      <SwatchBox>
        <SwatchList>
          {swatches.map(swatch => (
            <Swatch key={swatch.name} $selected={swatch.selected}>
              {swatch.color ? <Chip $color={swatch.color} /> : <NoneChip />}
              <span>{swatch.name}</span>
              {swatch.locked ? <LockedIcon /> : <b />}
              {swatch.tint ? <TintIcon /> : <b />}
              <ModeIcon mode={swatch.mode} />
            </Swatch>
          ))}
        </SwatchList>
        <ScrollThumb />
      </SwatchBox>
    </ColorArea>
    <FieldRows $columns="171px 120px auto">
      <RightLabel htmlFor="tint">Tint:</RightLabel>
      <StepField id="tint" value="100%" menu />
      <IconRow $before={9}>
        <Check checked mixed label="Overprint Fill" />
      </IconRow>
      <RightLabel htmlFor="weight">Weight:</RightLabel>
      <StepField id="weight" disabled menu />
      <IconRow $before={9}>
        <Check disabled label="Overprint Stroke" />
      </IconRow>
      <RightLabel htmlFor="miter">Miter Limit:</RightLabel>
      <StepField id="miter" disabled soft />
      <IconRow $before={9} $gap={14}>
        <span>x</span>
        <IconRow $gap={18}>
          <JoinIcon d="M0 0h19v19H0z" />
          <JoinIcon d="M9 0h10v19H0V9q0-9 9-9z" />
          <JoinIcon d="M9 0h10v19H0V9z" />
        </IconRow>
      </IconRow>
      <RightLabel as="span">Stroke Alignment:</RightLabel>
      <IconRow $before={5} $gap={16}>
        <AlignIcon />
        <AlignIcon wide />
      </IconRow>
    </FieldRows>
  </Dialog>
);

function App() {
  return (
    <Page>
      <GlobalStyle />
      <Windows>
        <FirstWindow />
        <SecondWindow />
        <SlantedArrow x={203} y={173} />
        <SlantedArrow x={516} y={173} />
        <SlantedArrow x={1005} y={161} />
        <SlantedArrow x={1307} y={161} />
      </Windows>
      <Dialogs>
        <ParagraphDialog />
        <CharacterDialog />
      </Dialogs>
    </Page>
  );
}

export default App;
